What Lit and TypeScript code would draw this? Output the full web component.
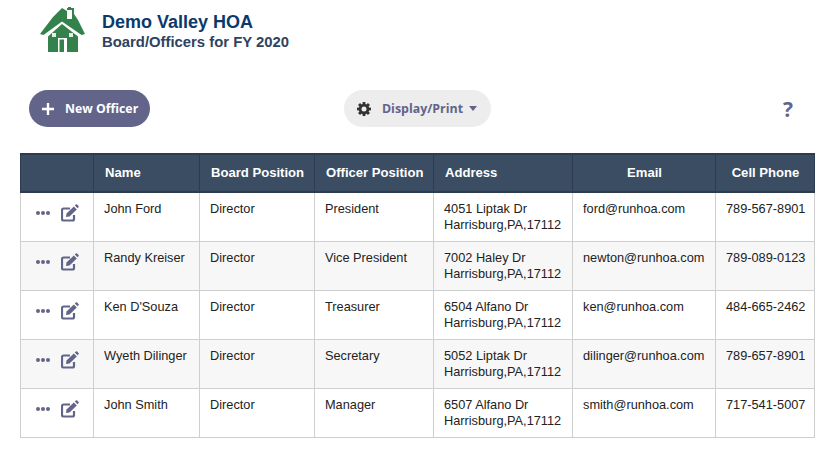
import { LitElement, html, css, svg } from "lit";
import { customElement } from "lit/decorators.js";

const officers = [
  ["John Ford", "Director", "President", "4051 Liptak Dr", "ford@runhoa.com", "789-567-8901"],
  ["Randy Kreiser", "Director", "Vice President", "7002 Haley Dr", "newton@runhoa.com", "789-089-0123"],
  ["Ken D'Souza", "Director", "Treasurer", "6504 Alfano Dr", "ken@runhoa.com", "484-665-2462"],
  ["Wyeth Dilinger", "Director", "Secretary", "5052 Liptak Dr", "dilinger@runhoa.com", "789-657-8901"],
  ["John Smith", "Director", "Manager", "6507 Alfano Dr", "smith@runhoa.com", "717-541-5007"],
];

const editIcon = svg`<svg class="edit" viewBox="0 0 18 18" width="18" height="18">
  <path d="M13 11v4a1.500 1.500 0 0 1-1.500 1.500h-9A1.500 1.500 0 0 1 1 15V6a1.500 1.500 0 0 1 1.500-1.500H9" fill="none" stroke="#62648a" stroke-width="2.200"/>
  <path d="M5.500 9.500 12.800 2.400l3 3L8.500 12.500l-3.500.5z" fill="#62648a"/>
  <path d="M13.800 1.500 14.800.6a1 1 0 0 1 1.400 0l1.300 1.300a1 1 0 0 1 0 1.400l-1 1z" fill="#62648a"/>
</svg>`;

const gearTeeth = [0, 45, 90, 135, 180, 225, 270, 315];

@customElement("app-root")
export class AppRoot extends LitElement {
  static styles = css`
    :host { display: block; width: 832px; height: 460px; background: #fff; font-family: "Liberation Sans", Arial, sans-serif; overflow: hidden; }
    .head { display: flex; align-items: flex-start; gap: 16px; padding: 7px 0 0 40px; height: 84px; box-sizing: border-box; }
    .logo { display: block; flex: none; }
    .titles { padding-top: 5px; }
    h1 { margin: 0; font-size: 18px; line-height: 20px; font-weight: 700; color: #0b3a6a; }
    h2 { margin: 0; font-size: 14.85px; line-height: 20px; font-weight: 700; color: #2f4260; }
    .bar { display: grid; grid-template-columns: 1fr auto 1fr; align-items: center; padding: 0 26px 0 29px; height: 37px; margin-top: 6px; }
    .btn { display: inline-flex; align-items: center; border-radius: 19px; height: 37px; box-sizing: border-box; font-family: "Open Sans", sans-serif; font-weight: 700; font-size: 12.3px; }
    .new { background: #62648a; color: #fff; padding: 0 12px 0 13px; gap: 11px; justify-self: start; }
    .disp { background: #ededed; color: #62648a; padding: 0 14px 0 13px; gap: 11px; font-size: 12.4px; }
    .caret { width: 0; height: 0; border: 4.5px solid transparent; border-top: 5px solid #62648a; border-bottom: 0; margin-left: -5px; }
    .help { justify-self: end; padding-right: 13px; color: #62648a; font-family: "Open Sans", sans-serif; font-weight: 700; font-size: 21px; line-height: 24px; }
    .wrap { padding: 26px 17px 0 20px; }
    table { border-collapse: collapse; table-layout: fixed; width: 794px; font-size: 12.75px; }
    th { background: #3a4d63; color: #fff; font-size: 13.1px; font-weight: 700; height: 38px; box-sizing: border-box; padding: 0 10px 2px 11px; text-align: left; border: 1px solid #2c3c4e; border-top-width: 2px; border-bottom-width: 2px; white-space: nowrap; }
    th.c { text-align: center; }
    td { height: 49px; box-sizing: border-box; border: 1px solid #cfcfcf; padding: 8px 10px 0; vertical-align: top; color: #222; line-height: 16px; white-space: nowrap; }
    tbody tr:nth-child(even) td { background: #f7f7f7; }
    .acts { display: flex; align-items: center; gap: 11px; padding: 3px 0 0 5px; }
    .dots { display: flex; gap: 1px; }
    .dots i { width: 4px; height: 4px; border-radius: 50%; background: #62648a; display: block; }
    .edit { display: block; }
  `;

  render() {
    return html`
      <div class="head">
        <svg class="logo" width="46" height="46" viewBox="0 0 46 46">
          <path d="M22 1 L27 4 V1 h1 V0 h3 V1 h3 V7 L38 13 L45 27 L41.500 28 L22 14.500 L3.500 28 L0 27 L13 10 Z" fill="#33824c"/>
          <path d="M22 17 L38 29.500 V45 H8 V29.500 Z" fill="#33824c"/>
          <rect x="27" y="3" width="5" height="9" fill="#fff"/>
          <rect x="18" y="31" width="9" height="14" fill="#fff"/>
          <rect x="19.500" y="32.500" width="4.500" height="12.500" fill="#33824c"/>
          <rect x="12" y="26" width="4" height="4" fill="#e4f0e7"/>
          <rect x="29" y="26" width="4" height="4" fill="#e4f0e7"/>
        </svg>
        <div class="titles">
          <h1>Demo Valley HOA</h1>
          <h2>Board/Officers for FY 2020</h2>
        </div>
      </div>
      <div class="bar">
        <div class="btn new">
          <svg width="12" height="12" viewBox="0 0 12 12"><path d="M6 0v12M0 6h12" stroke="#fff" stroke-width="2.400"/></svg>
          <span>New Officer</span>
        </div>
        <div class="btn disp">
          <svg width="14" height="14" viewBox="0 0 14 14">
            <circle cx="7" cy="7" r="3.900" fill="none" stroke="#333" stroke-width="2.800"/>
            ${gearTeeth.map((a) => svg`<rect x="5.600" y="0" width="2.800" height="3" fill="#333" transform="rotate(${a} 7 7)"/>`)}
          </svg>
          <span>Display/Print</span>
          <i class="caret"></i>
        </div>
        <div class="help">?</div>
      </div>
      <div class="wrap">
        <table>
          <colgroup><col style="width:73px"><col style="width:106px"><col style="width:115px"><col style="width:119px"><col style="width:139px"><col style="width:143px"><col style="width:99px"></colgroup>
          <thead><tr>
            <th></th><th>Name</th><th>Board Position</th><th>Officer Position</th><th>Address</th><th class="c">Email</th><th class="c">Cell Phone</th>
          </tr></thead>
          <tbody>
            ${officers.map((o) => html`<tr>
              <td><div class="acts"><span class="dots"><i></i><i></i><i></i></span>${editIcon}</div></td>
              <td>${o[0]}</td><td>${o[1]}</td><td>${o[2]}</td>
              <td>${o[3]}<br>Harrisburg,PA,17112</td>
              <td>${o[4]}</td><td>${o[5]}</td>
            </tr>`)}
          </tbody>
        </table>
      </div>
    `;
  }
}
